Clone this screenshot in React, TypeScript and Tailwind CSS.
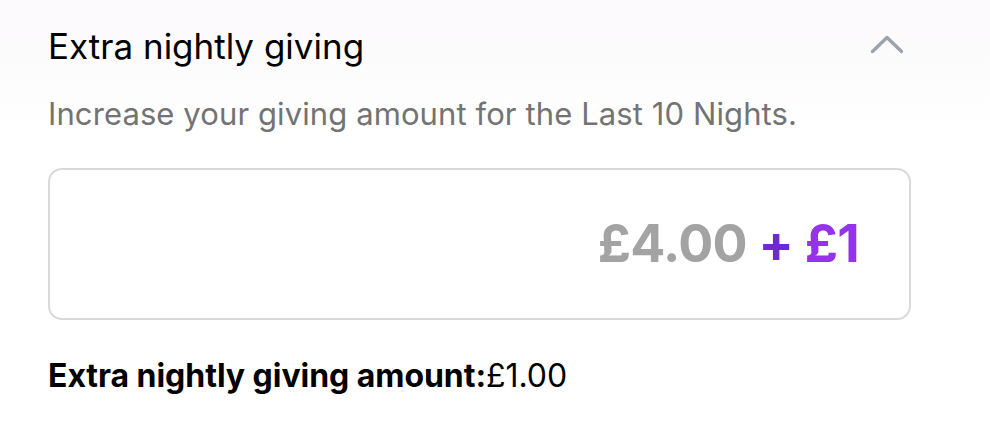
import React, { useState } from 'react';

const ChevronUp: React.FC<{ className?: string }> = ({ className }) => (
  <svg viewBox="0 0 34 20" className={className} fill="none">
    <path d="M2.5 17.5 L17 3.5 L31.5 17.5" stroke="currentColor" strokeWidth="3.4" strokeLinecap="round" strokeLinejoin="round" />
  </svg>
);

const App: React.FC = () => {
  const [open, setOpen] = useState(true);
  const base = 4;
  const extra = 1;

  return (
    <div
      className="w-[990px] h-[442px] bg-gradient-to-b from-[#fbf9fb] to-white to-[30%] text-black"
      style={{ fontFamily: 'Inter, "Noto Sans", sans-serif' }}
    >
      <div className="pl-[48px] pr-[80px] pt-[22px]">
        <div className="flex items-center justify-between">
          <h2 className="text-[35px] leading-[48px] font-normal tracking-[0px]">Extra nightly giving</h2>
          <button onClick={() => setOpen(!open)} className="text-[#9ca3af] pr-[6px] mt-[-4px]">
            <ChevronUp className="w-[34px] h-[20px]" />
          </button>
        </div>
        <p className="mt-[24px] text-[31px] leading-[40px] text-[#737373] tracking-[0.1px]">
          Increase your giving amount for the Last 10 Nights.
        </p>
      </div>

      <div className="pl-[48px] w-[911px] mt-[34px]">
        <div className="h-[152px] border-2 border-[#d9d9d9] rounded-[14px] bg-white flex items-center justify-end pr-[50px]">
          <span className="text-[52px] font-bold tracking-[-0.7px]">
            <span className="text-[#a3a3a3]">£{base.toFixed(2)}</span>
            <span className="text-[#6d28d9]"> + </span>
            <span className="text-[#9333ea]">£{extra}</span>
          </span>
        </div>
      </div>

      <p className="pl-[48px] mt-[36px] text-[32px] leading-[40px] tracking-[-0.05px]">
        <span className="font-bold">Extra nightly giving amount:</span>
        <span>£{extra.toFixed(2)}</span>
      </p>
    </div>
  );
};

export default App;
